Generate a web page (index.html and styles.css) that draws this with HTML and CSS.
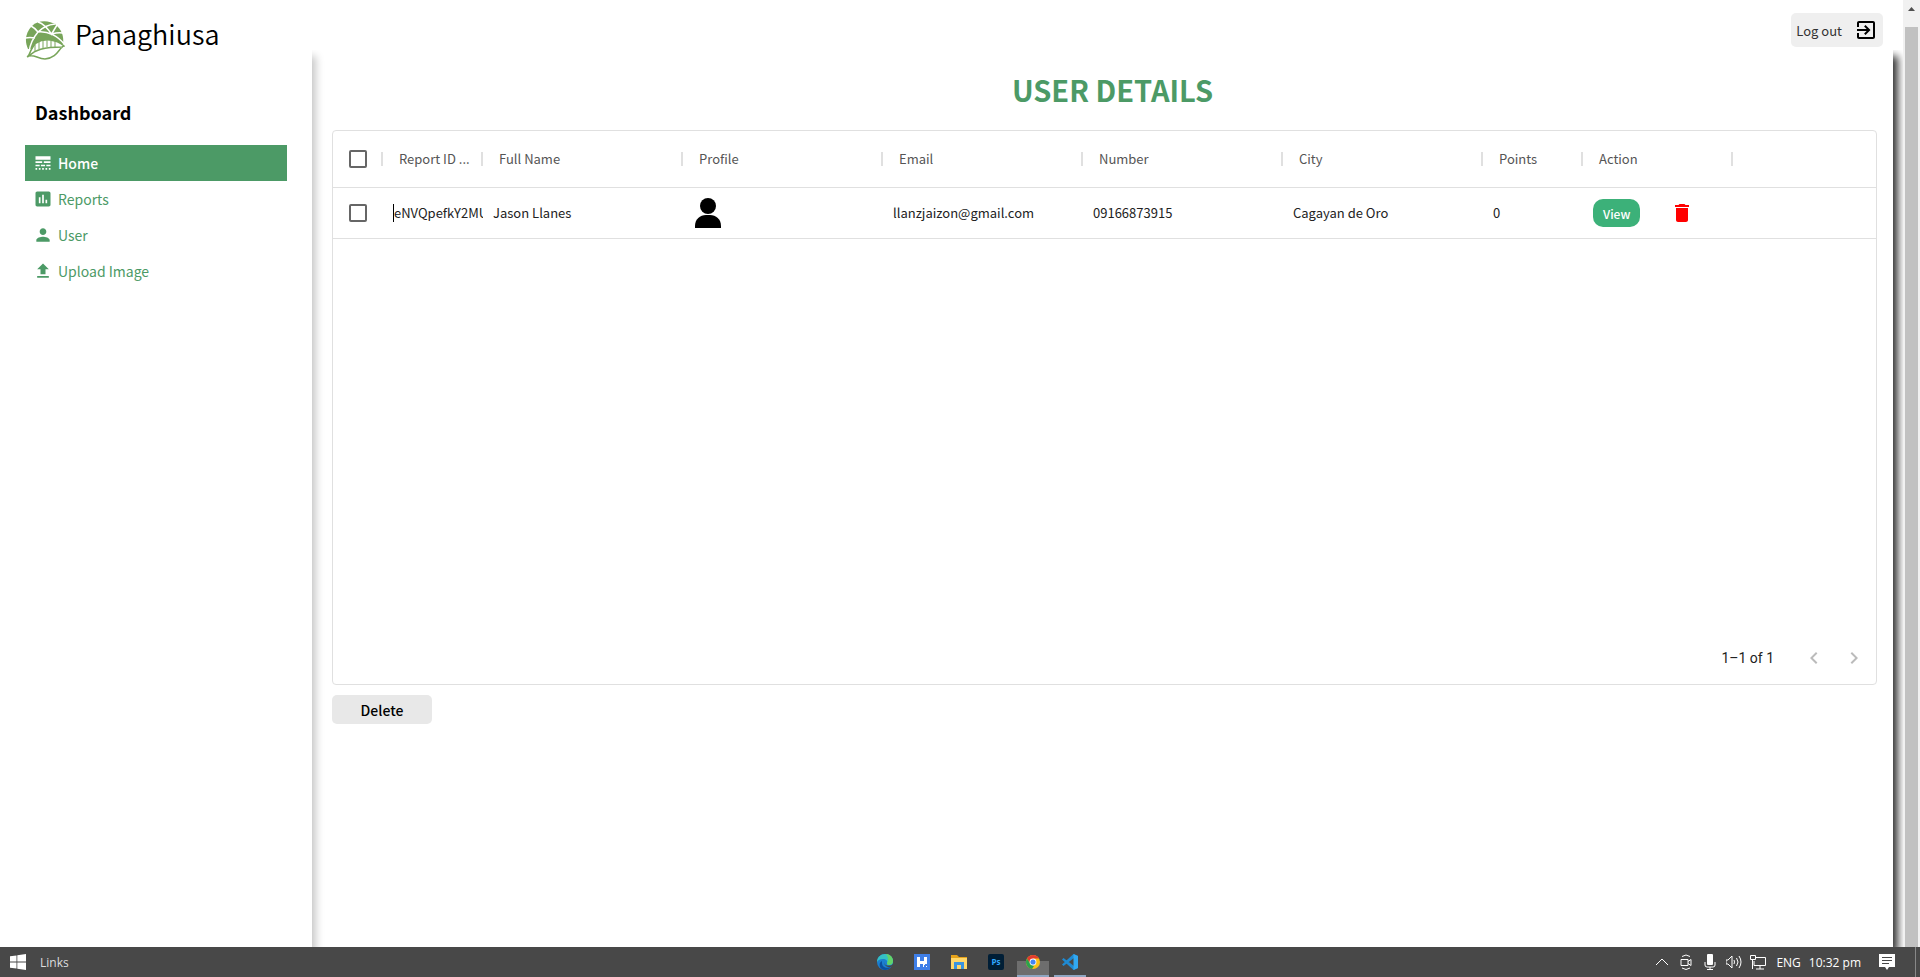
FILE: index.html
```html
<!DOCTYPE html>
<html lang="en">
<head>
<meta charset="UTF-8">
<meta name="viewport" content="width=device-width, initial-scale=1.0">
<title>Panaghiusa</title>
<link rel="stylesheet" href="styles.css">
</head>
<body>

<div class="viewport">
    <div class="app">
        <header class="topbar">
            <div class="brand">
                <svg class="logo" viewBox="0 0 40 40">
                    <path fill="#78a55a" d="M3 29C-1 20 1 12 7 6 13 0 24 0 31 5c6 5 8 12 7 19L20 30z"/>
                    <path fill="none" stroke="#fff" stroke-width="1.5" d="M4 32C5 24 8 18 13 12c10-1 20 4 26 12M0 18q5-1 10 0M6 6q4 2 7 6 7-7 17-8M13 2q7 2 14 13M32 5q-3 5-6 10M27 14q6-2 11-1"/>
                    <path fill="#fff" d="M5 34c2-5 4-9 7-12 8-4 19-3 27 4-5 3-5 12-19 14-6 0-10-3-15-3z"/>
                    <path fill="none" stroke="#78a55a" stroke-width="1.5" d="M2 37c2-1 3-4 4-7M3 37c2-5 4-10 8-14 8-5 20-4 28 3-5 1-6 12-19 13-7 0-11-5-16-3M4 36c6-6 14-9 34-9"/>
                    <path fill="none" stroke="#78a55a" d="M10 25v6M14 22v7M18 20v8M22 20v7M26 21v6M30 21v6"/>
                </svg>
                <span class="brand-name">Panaghiusa</span>
            </div>
            <button class="logout" type="button">Log out
                <svg class="icon-24" viewBox="0 0 24 24"><path d="M10.09 15.59L11.5 17l5-5-5-5-1.41 1.41L12.67 11H3v2h9.67l-2.58 2.59zM19 3H5c-1.11 0-2 .9-2 2v4h2V5h14v14H5v-4H3v4c0 1.1.89 2 2 2h14c1.1 0 2-.9 2-2V5c0-1.1-.9-2-2-2z"/></svg>
            </button>
        </header>

        <div class="content">
            <nav class="sidebar">
                <h3 class="sidebar-title">Dashboard</h3>
                <ul class="menu">
                    <li><a class="menu-item active" href="#">
                        <svg class="icon-20" viewBox="0 0 24 24"><path d="M3 16h5v-2H3v2zm6.5 0h5v-2h-5v2zm6.5 0h5v-2h-5v2zM3 20h2v-2H3v2zm4 0h2v-2H7v2zm4 0h2v-2h-2v2zm4 0h2v-2h-2v2zm4 0h2v-2h-2v2zM3 12h8v-2H3v2zm10 0h8v-2h-8v2zM3 4v4h18V4H3z"/></svg>
                        Home</a></li>
                    <li><a class="menu-item" href="#">
                        <svg class="icon-20" viewBox="0 0 24 24"><path d="M19 3H5c-1.1 0-2 .9-2 2v14c0 1.1.9 2 2 2h14c1.1 0 2-.9 2-2V5c0-1.1-.9-2-2-2zM9 17H7v-7h2v7zm4 0h-2V7h2v10zm4 0h-2v-4h2v4z"/></svg>
                        Reports</a></li>
                    <li><a class="menu-item" href="#">
                        <svg class="icon-20" viewBox="0 0 24 24"><path d="M12 12c2.21 0 4-1.79 4-4s-1.79-4-4-4-4 1.79-4 4 1.79 4 4 4zm0 2c-2.67 0-8 1.34-8 4v2h16v-2c0-2.66-5.33-4-8-4z"/></svg>
                        User</a></li>
                    <li><a class="menu-item" href="#">
                        <svg class="icon-20" viewBox="0 0 24 24"><path d="M9 16h6v-6h4l-7-7-7 7h4zm-4 2h14v2H5z"/></svg>
                        Upload Image</a></li>
                </ul>
            </nav>

            <main class="main">
                <h1 class="page-title">USER DETAILS</h1>

                <div class="grid">
                    <table class="users">
                        <colgroup>
                            <col class="col-check"><col class="col-small"><col class="col-wide"><col class="col-wide"><col class="col-wide"><col class="col-wide"><col class="col-wide"><col class="col-small"><col class="col-action"><col>
                        </colgroup>
                        <thead>
                            <tr>
                                <th class="check"><input class="box" type="checkbox" aria-label="Select all rows"></th>
                                <th>Report ID ...</th>
                                <th>Full Name</th>
                                <th>Profile</th>
                                <th>Email</th>
                                <th>Number</th>
                                <th>City</th>
                                <th>Points</th>
                                <th>Action</th>
                                <td></td>
                            </tr>
                        </thead>
                        <tbody>
                            <tr>
                                <td class="check"><input class="box" type="checkbox" aria-label="Select row"></td>
                                <td class="id"><span class="caret">eNVQpefkY2MU</span></td>
                                <td>Jason Llanes</td>
                                <td><svg class="avatar" viewBox="0 0 32 32"><circle cx="15" cy="9" r="8"/><path d="M2 31v-2c0-7 5-11 11-11h4c6 0 11 4 11 11v2z"/></svg></td>
                                <td>llanzjaizon@gmail.com</td>
                                <td>09166873915</td>
                                <td>Cagayan de Oro</td>
                                <td>0</td>
                                <td>
                                    <div class="actions">
                                        <button class="view" type="button">View</button>
                                        <button class="trash" type="button" aria-label="Delete user">
                                            <svg class="icon-24" viewBox="0 0 24 24"><path d="M6 19c0 1.1.9 2 2 2h8c1.1 0 2-.9 2-2V7H6v12zM19 4h-3.5l-1-1h-5l-1 1H5v2h14V4z"/></svg>
                                        </button>
                                    </div>
                                </td>
                                <td></td>
                            </tr>
                        </tbody>
                    </table>
                    <div class="pager">
                        <span>1–1 of 1</span>
                        <button class="page-btn" type="button" aria-label="Previous page" disabled><svg class="icon-24" viewBox="0 0 24 24"><path d="M15.41 7.41L14 6l-6 6 6 6 1.41-1.41L10.83 12z"/></svg></button>
                        <button class="page-btn" type="button" aria-label="Next page" disabled><svg class="icon-24" viewBox="0 0 24 24"><path d="M10 6L8.59 7.41 13.17 12l-4.58 4.59L10 18l6-6z"/></svg></button>
                    </div>
                </div>

                <button class="delete" type="button">Delete</button>
            </main>
        </div>
    </div>

    <div class="scrollbar">
        <svg class="scroll-arrow" viewBox="0 0 17 17"><path d="M5 11l3.5-4 3.5 4z"/></svg>
        <div class="scroll-thumb"></div>
    </div>
</div>

<footer class="taskbar">
    <div class="task-left">
        <svg class="icon-16" viewBox="0 0 16 16"><path fill="#fff" d="M0 2.3L6.5 1.4v6.2H0zM7.3 1.3L16 0v7.6H7.3zM0 8.4h6.5v6.2L0 13.7zM7.3 8.4H16V16l-8.7-1.3z"/></svg>
        <span>Links</span>
    </div>

    <div class="task-apps">
        <!-- Edge -->
        <div class="app-icon"><svg class="icon-16" viewBox="0 0 16 16">
            <circle cx="8" cy="8" r="8" fill="#1b7fd0"/>
            <path fill="#35c1c4" d="M0 8C0 3 4 0 8 0s8 3 8 7c0 3-2 4-4 4s-2-1-2-2c1-2-1-4-4-4-3 0-5 1-6 3z"/>
            <path fill="#62d36a" d="M9 0c4 0 7 3 7 7 0 3-2 4-4 4s-2-1-2-2c2-3 1-6-1-9z"/>
            <path fill="#0c4f9e" d="M5 9c0 4 4 6 9 4-3 4-9 4-11 0-1-3 0-5 2-6z"/>
            <path fill="#484848" d="M7 8c0 3 4 5 8 3l1-1v2l-2 1c-4 1-7-2-7-5z"/>
        </svg></div>
        <div class="app-icon"><svg class="icon-16" viewBox="0 0 16 16">
            <path fill="#3f7fe8" d="M0 0h16v16H0z"/>
            <path fill="#fff" d="M3 3h3v4h4V3h3v7h-2v1h-1v2H9v-3H6v3H3zM12 12h1v1h-1z"/>
        </svg></div>
        <!-- Explorer -->
        <div class="app-icon"><svg class="icon-16" viewBox="0 0 16 16">
            <path fill="#e5a21a" d="M0 1h6l2 2h8v3H0z"/><path fill="#ffd76a" d="M0 4h16v11H0z"/><path fill="#3a94e0" d="M3 8h10v7h-3v-4H6v4H3z"/>
        </svg></div>
        <div class="app-icon"><svg class="icon-16" viewBox="0 0 16 16">
            <rect width="16" height="16" rx="2" fill="#001e36"/>
            <text class="ps" x="8" y="11" text-anchor="middle">Ps</text>
        </svg></div>
        <!-- Chrome -->
        <div class="app-icon running current"><svg class="icon-16" viewBox="0 0 16 16">
            <circle cx="8" cy="8" r="7" fill="#fbc116"/>
            <path fill="#e33b2e" d="M2 4.5A7 7 0 0 1 14.1 4.5H8L5 9.5z"/>
            <path fill="#2ba24c" d="M2 4.5L5.5 10 9 12l-2 3A7 7 0 0 1 2 4.5z"/>
            <circle cx="8" cy="8" r="3.4" fill="#fff"/><circle cx="8" cy="8" r="2.6" fill="#4285f4"/>
        </svg></div>
        <!-- VS Code -->
        <div class="app-icon running"><svg class="icon-16" viewBox="0 0 16 16">
            <path fill="#1f8ad2" d="M11.5 0L16 2v12l-4.5 2L0 5.5 1.5 4 12 12V4L1.5 12 0 10.5z"/>
            <path fill="#32a9f2" d="M11.5 0L16 2v12l-4.5 2z"/>
        </svg></div>
    </div>

    <div class="tray">
        <svg class="icon-16" viewBox="0 0 16 16"><path class="line" d="M2 11l6-6 6 6"/></svg>
        <svg class="icon-16" viewBox="0 0 16 16"><path class="line" d="M3 5.5h7v6H3zM10 7.5l3-2v6l-3-2M4 2.5q4-3 8 0M4 14q4 3 8 0"/></svg>
        <svg class="icon-16" viewBox="0 0 16 16"><rect x="5" y="0" width="6" height="11" rx="1" fill="#fff"/><path class="line" d="M3 8v3q0 2 2 2h6q2 0 2-2V8M8 13v3M5 15.5h6"/></svg>
        <svg class="icon-16" viewBox="0 0 16 16"><path class="line" d="M0 6h2l4-4v12l-4-4H0zM8 6q1 2 0 4M10.5 4q3 4 0 8M13 2q4 6 0 12"/></svg>
        <svg class="icon-16" viewBox="0 0 16 16"><path class="line" d="M6 3.5h9.5v8H4V7M10 12v3M6 15h8M.5 1.5h5v4h-5zM2.5 6v9"/></svg>
        <span class="lang">ENG</span>
        <span class="clock">10:32 pm</span>
        <svg class="icon-16" viewBox="0 0 16 16"><path fill="#fff" d="M0 0h16v13h-6l-2 3-2-3H0z"/><path stroke="#484848" d="M3 3.5h10M3 6.5h10M3 9.5h7"/></svg>
    </div>
</footer>

</body>
</html>
```

FILE: styles.css
```css
* {
    box-sizing: border-box;
}
body {
    margin: 0;
    height: 100vh;
    display: flex;
    flex-direction: column;
    background: #fff;
    font-family: "Noto Sans CJK JP", "Noto Sans", sans-serif;
    color: #000;
}
button {
    font-family: inherit;
    border: none;
    cursor: pointer;
}
svg {
    display: block;
    flex: none;
    fill: currentColor;
}
.icon-16 {
    width: 16px;
    height: 16px;
}
.icon-20 {
    width: 20px;
    height: 20px;
}
.icon-24 {
    width: 24px;
    height: 24px;
}

/* page + scrollbar */
.viewport {
    flex: 1;
    min-height: 0;
    display: flex;
}
.app {
    flex: 1;
    min-width: 0;
    display: flex;
    flex-direction: column;
    overflow: hidden;
}
.topbar {
    position: relative;
    z-index: 2;
    height: 50px;
    display: flex;
    justify-content: space-between;
    align-items: flex-start;
    padding: 0 20px 0 25px;
    background: #fff;
}
.brand {
    display: flex;
    align-items: flex-start;
    gap: 10px;
}
.logo {
    width: 40px;
    height: 40px;
    margin-top: 20px;
}
.brand-name {
    margin-top: 14px;
    font-size: 27px;
    font-weight: 350;
    line-height: 40px;
}
.logout {
    display: flex;
    align-items: center;
    gap: 12px;
    height: 34px;
    margin-top: 13px;
    padding: 5px;
    border-radius: 5px;
    background: #efefef;
    font-size: 13px;
    color: #333;
}
.logout svg {
    color: #000;
}

.content {
    flex: 1;
    display: flex;
}
.sidebar {
    position: relative;
    width: 312px;
    padding: 47px 25px 0;
    box-shadow: 4px 6px 8px rgba(0, 0, 0, 0.22);
}
.sidebar-title {
    margin: 0 0 18px;
    padding-left: 10px;
    font-size: 18px;
    line-height: 30px;
}
.menu {
    list-style: none;
    margin: 0;
    padding: 0;
}
.menu-item {
    display: flex;
    align-items: center;
    gap: 5px;
    height: 36px;
    padding: 0 8px;
    font-size: 14px;
    color: #4c9a66;
    text-decoration: none;
}
.menu-item.active {
    background: #4c9a66;
    color: #fff;
    font-weight: 500;
}

.main {
    flex: 1;
    min-width: 0;
    margin-right: 10px;
    padding: 19px 16px 0 20px;
    box-shadow: 5px 6px 8px rgba(0, 0, 0, 0.8);
    clip-path: inset(0 -10px 0 0);
}
.page-title {
    margin: 0 -16px 21px 0;
    font-size: 29px;
    line-height: 40px;
    text-align: center;
    color: #4c9a66;
}
.grid {
    display: flex;
    flex-direction: column;
    justify-content: space-between;
    min-height: 555px;
    border: 1px solid #e0e0e0;
    border-radius: 4px;
}
.users {
    width: 100%;
    table-layout: fixed;
    border-collapse: separate;
    border-spacing: 0;
    font-size: 13px;
    line-height: 18px;
    color: #222;
}
.col-check {
    width: 50px;
}
.col-small {
    width: 100px;
}
.col-wide {
    width: 200px;
}
.col-action {
    width: 150px;
}
.users th,
.users td {
    padding: 0 10px;
    border-bottom: 1px solid #e0e0e0;
    text-align: left;
    white-space: nowrap;
}
.users th {
    height: 57px;
    padding: 0 6px 0 16px;
    font-weight: 400;
    color: #555;
    background: linear-gradient(#e0e0e0, #e0e0e0) right center / 2px 14px no-repeat;
}
.users tbody td {
    height: 51px;
}
.users .check {
    padding: 0 0 0 16px;
}
.users .id {
    padding-right: 0;
    overflow: hidden;
}
.box {
    appearance: none;
    display: block;
    width: 18px;
    height: 18px;
    margin: 0;
    border: 2px solid #666;
    border-radius: 2px;
}
.caret {
    display: inline-block;
    border-left: 1px solid #000;
}
.avatar {
    width: 32px;
    height: 32px;
    color: #000;
}
.actions {
    display: flex;
    align-items: center;
    gap: 30px;
}
.view {
    height: 28px;
    padding: 0 10px;
    border-radius: 10px;
    background: #3cb179;
    color: #fff;
    font-size: 12px;
    font-weight: 500;
}
.trash {
    padding: 0;
    background: none;
    color: #f00;
}
.pager {
    display: flex;
    justify-content: flex-end;
    align-items: center;
    height: 52px;
    padding-right: 10px;
    font-family: Roboto, sans-serif;
    font-size: 14px;
    color: #222;
}
.page-btn {
    margin-left: 16px;
    padding: 0;
    background: none;
    color: #bbb;
}
.pager span {
    margin-right: 12px;
}
.delete {
    width: 100px;
    height: 29px;
    margin-top: 10px;
    border-radius: 5px;
    background: #e8e8e8;
    font-size: 14px;
    font-weight: 500;
    color: #000;
}

.scrollbar {
    position: relative;
    z-index: 3;
    width: 17px;
    display: flex;
    flex-direction: column;
    background: #f1f1f1;
}
.scroll-arrow {
    width: 17px;
    height: 17px;
    color: #505050;
}
.scroll-thumb {
    flex: 1;
    margin: 10px 2px 0;
    background: #c1c1c1;
}

/* taskbar */
.taskbar {
    height: 30px;
    display: grid;
    grid-template-columns: 1fr auto 1fr;
    align-items: center;
    background: #484848;
    color: #fff;
    font-family: "Open Sans", "Noto Sans", sans-serif;
    font-size: 12px;
}
.task-left {
    display: flex;
    align-items: center;
    gap: 14px;
    padding-left: 10px;
    color: #ddd;
}
.task-apps {
    display: flex;
    gap: 5px;
    margin-left: 35px;
}
.app-icon {
    width: 32px;
    height: 30px;
    padding: 7px 8px 0;
}
.running {
    border-bottom: 2px solid #8fa6c2;
}
.current {
    background: linear-gradient(#6e6e6e, #6e6e6e) 0 14px no-repeat;
}
.ps {
    font-size: 8px;
    font-weight: 700;
    fill: #31a8ff;
}
.tray {
    display: flex;
    justify-content: flex-end;
    align-items: center;
    gap: 8px;
    margin-right: 4px;
    padding-right: 20px;
    border-right: 1px solid #888;
    height: 30px;
}
.line {
    fill: none;
    stroke: #fff;
}
.lang {
    margin-left: 2px;
}
.clock {
    margin-right: 10px;
}
```
